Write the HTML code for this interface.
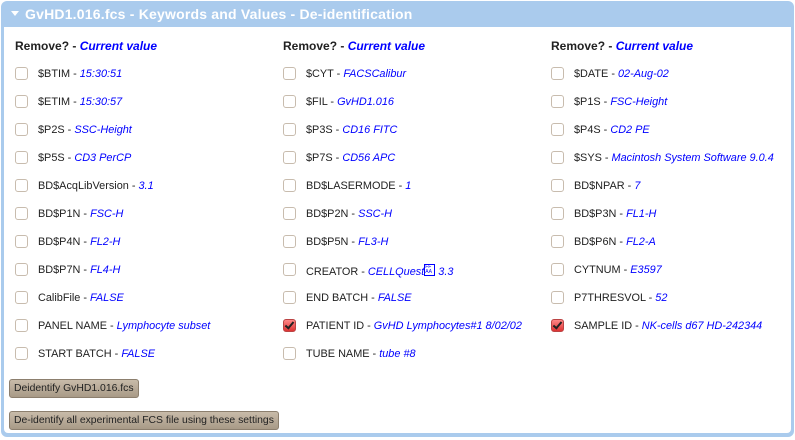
<!DOCTYPE html>
<html><head><meta charset="utf-8"><style>
body{margin:0;width:795px;height:440px;background:#fff;font-family:"Liberation Sans",sans-serif;position:relative;overflow:hidden}
.panel{position:absolute;left:1px;top:1px;width:793px;height:436px;background:#aacbed;border-radius:6px}
.inner{position:absolute;left:4px;top:27px;width:787px;height:406px;background:#fff;border-radius:0 0 4px 4px}
.title{position:absolute;left:10px;top:5px;color:#fff;font-weight:bold;font-size:14px;letter-spacing:0.2px}
.title .arr{display:inline-block;width:0;height:0;border-left:4px solid transparent;border-right:4px solid transparent;border-top:5px solid #fff;margin:0 6px 3px 0}
.h{position:absolute;font-weight:bold;font-size:12px;color:#222;top:39px}
.h i{color:#00f}
.r{position:absolute;font-size:10.9px;color:#222;white-space:nowrap}
.r i{color:#00f}
.cb{position:absolute;width:11px;height:11px;border:1px solid #c8bcae;border-radius:3px;background:#fff}
.cb.on{background:linear-gradient(#f88,#d33);border-color:#b44}
.cb.on:after{content:"";position:absolute;left:3px;top:0px;width:3px;height:7px;border:solid #222;border-width:0 2px 2px 0;transform:rotate(40deg)}
.btn{position:absolute;left:9px;background:linear-gradient(#c8bba9,#a89a87);border:1px solid #8c7f6e;border-radius:3px;font-size:10.4px;color:#222;padding:0 4px;height:17px;line-height:17px}
</style></head><body>
<div class="panel"><div class="title"><span class="arr"></span>GvHD1.016.fcs - Keywords and Values - De-identification</div></div>
<div class="inner"></div>
<div class="h" style="left:15px">Remove? - <i>Current value</i></div>
<div class="h" style="left:283px">Remove? - <i>Current value</i></div>
<div class="h" style="left:551px">Remove? - <i>Current value</i></div>
<div id="rows"></div>
<script>
var cols=[[15,[["$BTIM","15:30:51"],["$ETIM","15:30:57"],["$P2S","SSC-Height"],["$P5S","CD3 PerCP"],["BD$AcqLibVersion","3.1"],["BD$P1N","FSC-H"],["BD$P4N","FL2-H"],["BD$P7N","FL4-H"],["CalibFile","FALSE"],["PANEL NAME","Lymphocyte subset"],["START BATCH","FALSE"]]],
[283,[["$CYT","FACSCalibur"],["$FIL","GvHD1.016"],["$P3S","CD16 FITC"],["$P7S","CD56 APC"],["BD$LASERMODE","1"],["BD$P2N","SSC-H"],["BD$P5N","FL3-H"],["CREATOR","CELLQuest\uFFFF 3.3"],["END BATCH","FALSE"],["PATIENT ID","GvHD Lymphocytes#1 8/02/02",1],["TUBE NAME","tube #8"]]],
[551,[["$DATE","02-Aug-02"],["$P1S","FSC-Height"],["$P4S","CD2 PE"],["$SYS","Macintosh System Software 9.0.4"],["BD$NPAR","7"],["BD$P3N","FL1-H"],["BD$P6N","FL2-A"],["CYTNUM","E3597"],["P7THRESVOL","52"],["SAMPLE ID","NK-cells d67 HD-242344",1]]]];
var h="";
cols.forEach(function(c){c[1].forEach(function(r,i){var y=67+i*28;
var v=r[1].replace("\uFFFF",'<span style="display:inline-block;width:9px;height:10px;border:1px solid #00f;font-size:5px;line-height:5px;vertical-align:2px;font-style:normal">FF<br>AA</span>');
h+='<div class="cb'+(r[2]?' on':'')+'" style="left:'+c[0]+'px;top:'+y+'px"></div><div class="r" style="left:'+(c[0]+23)+'px;top:'+(y+1)+'px">'+r[0]+' - <i>'+v+'</i></div>';});});
document.getElementById("rows").innerHTML=h;
</script>
<div class="btn" style="top:379px">Deidentify GvHD1.016.fcs</div>
<div class="btn" style="top:411px">De-identify all experimental FCS file using these settings</div>
</body></html>
